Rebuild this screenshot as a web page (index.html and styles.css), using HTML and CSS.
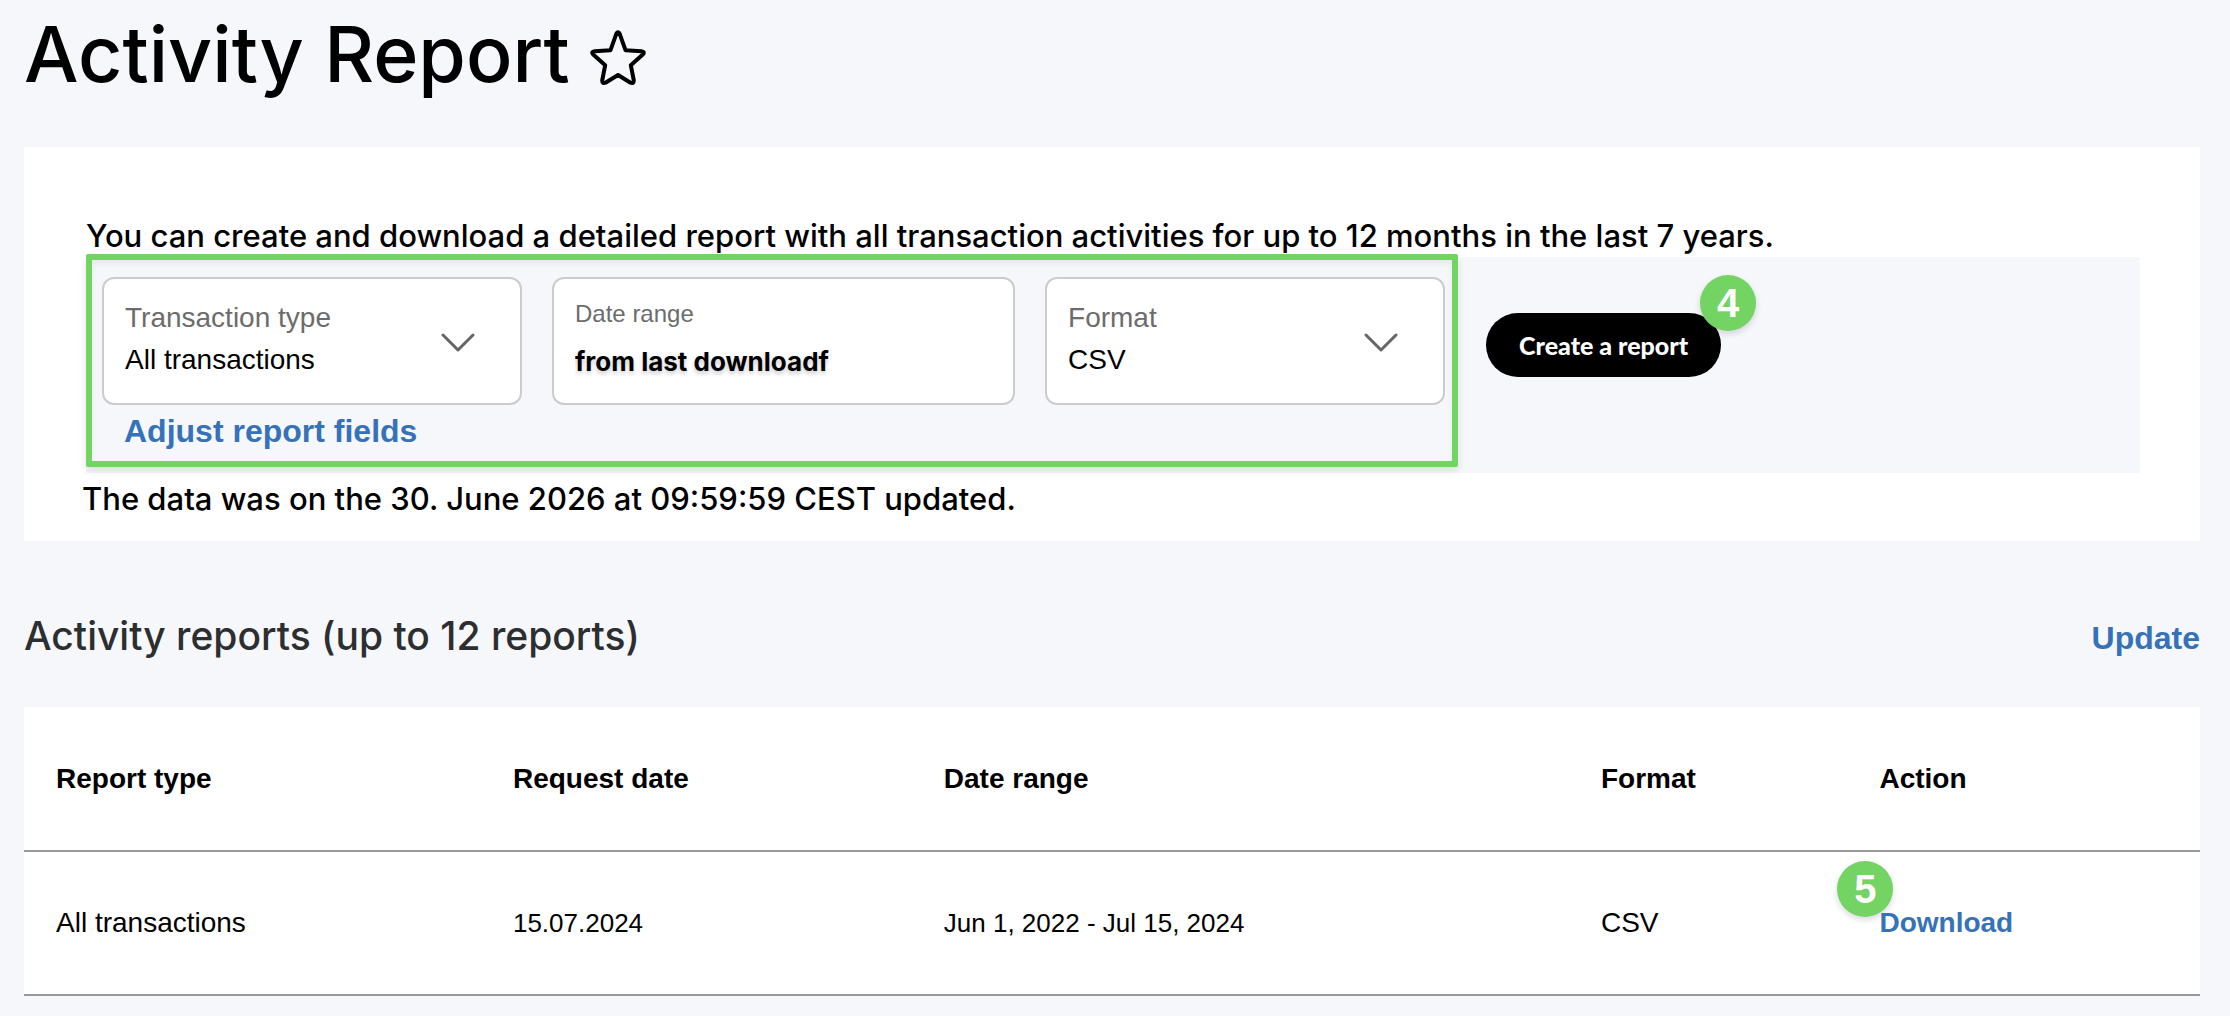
FILE: index.html
```html
<!DOCTYPE html>
<html lang="en">
<head>
    <meta charset="UTF-8">
    <meta name="viewport" content="width=device-width, initial-scale=1.0">
    <title>Activity Report</title>
    <link rel="stylesheet" href="styles.css">
</head>
<body>
    <header class="page-header">
        <h1>Activity Report</h1>
        <button type="button" class="favorite" aria-label="Add to favorites">
            <svg viewBox="0 0 56 56" width="56" height="56">
                <path d="M26.400 3.600 Q28 1 29.600 3.600 L35.500 20.200 L51.500 21.200 Q55.500 21.800 52.500 24.800 L40.800 35.200 L43.800 50.500 Q43.800 54 40.500 52.700 L28 45 L15.500 52.700 Q12.200 54 12.200 50.500 L15.200 35.200 L3.500 24.800 Q.5 21.800 4.500 21.200 L20.500 20.200 Z" />
            </svg>
        </button>
    </header>

    <section class="panel">
        <p class="intro">You can create and download a detailed report with all transaction activities for up to 12 months in the last 7 years.</p>
        <form class="report-form">
            <div class="filters">
                <div class="fields">
                    <div class="field">
                        <label for="transaction-type">Transaction type</label>
                        <select id="transaction-type" name="transactionType">
                            <option>All transactions</option>
                        </select>
                        <svg class="chevron" viewBox="0 0 34 20" width="34" height="20"><path d="M2 2 L17 17 L32 2" /></svg>
                    </div>
                    <div class="field date-field">
                        <label for="date-range">Date range</label>
                        <input type="text" id="date-range" name="dateRange" value="from last downloadf">
                    </div>
                    <div class="field">
                        <label for="format">Format</label>
                        <select id="format" name="format">
                            <option>CSV</option>
                        </select>
                        <svg class="chevron" viewBox="0 0 34 20" width="34" height="20"><path d="M2 2 L17 17 L32 2" /></svg>
                    </div>
                </div>
                <a class="adjust-link" href="#">Adjust report fields</a>
            </div>
            <div class="create">
                <button type="button" class="create-button">Create a report</button>
                <span class="step step-create">4</span>
            </div>
        </form>
        <p class="updated">The data was on the 30. June 2026 at 09:59:59 CEST updated.</p>
    </section>

    <div class="list-header">
        <h2>Activity reports (up to 12 reports)</h2>
        <a href="#">Update</a>
    </div>

    <table class="reports">
        <thead>
            <tr>
                <th class="col-type">Report type</th>
                <th class="col-request">Request date</th>
                <th class="col-range">Date range</th>
                <th class="col-format">Format</th>
                <th>Action</th>
            </tr>
        </thead>
        <tbody>
            <tr>
                <td>All transactions</td>
                <td class="date">15.07.2024</td>
                <td class="date">Jun 1, 2022 - Jul 15, 2024</td>
                <td>CSV</td>
                <td>
                    <div class="download">
                        <span class="step step-download">5</span>
                        <a href="#">Download</a>
                    </div>
                </td>
            </tr>
        </tbody>
    </table>
</body>
</html>
```

FILE: styles.css
```css
* {
    box-sizing: border-box;
}

body {
    margin: 0;
    padding: 6px 30px 20px 24px;
    background-color: #f5f7fb;
    color: #000;
    font-family: "Liberation Sans", Arial, sans-serif;
    font-size: 28px;
}

h1, h2, p {
    margin: 0;
    font-family: Inter, sans-serif;
    font-weight: 500;
}

a {
    color: #3672b9;
    font-weight: bold;
    text-decoration: none;
}

.page-header {
    display: flex;
    align-items: center;
    gap: 20px;
}

h1 {
    font-size: 77px;
    line-height: 96px;
}

.favorite {
    padding: 8px 0 0;
    border: none;
    background: none;
    cursor: pointer;
}

.favorite svg {
    display: block;
    fill: none;
    stroke: #000;
    stroke-width: 4;
    stroke-linejoin: round;
}

.panel {
    margin-top: 45px;
    padding: 67px 60px 21px 62px;
    background-color: #fff;
}

.intro,
.updated {
    font-size: 31px;
    line-height: 43px;
}

.report-form {
    display: flex;
    align-items: flex-start;
    gap: 28px;
    background-color: #f5f7fb;
}

/* green frame round the filters, slightly over the top edge of the form */
.filters {
    flex: 0 0 66.8%;
    margin: -3px 0 6px;
    padding: 17px 7px 10px 10px;
    border: 6px solid #73d363;
    border-radius: 2px;
    box-shadow: 0 4px 8px rgba(0, 0, 0, 0.1), inset 0 4px 6px rgba(0, 0, 0, 0.06);
}

.fields {
    display: grid;
    grid-template-columns: 420fr 463fr 400fr;
    gap: 30px;
}

.field {
    position: relative;
    display: flex;
    flex-direction: column;
    height: 128px;
    padding: 21px;
    border: 2px solid #ccc;
    border-radius: 12px;
    background-color: #fff;
}

.field label {
    color: #6c6c6c;
    line-height: 36px;
}

.field select,
.field input {
    width: 100%;
    height: 52px;
    padding: 0;
    border: none;
    outline: none;
    appearance: none;
    background: none;
    color: #000;
    font: inherit;
}

.date-field label {
    font-size: 24px;
    line-height: 28px;
}

.date-field input {
    margin-top: 12px;
    font-family: Inter, sans-serif;
    font-size: 26px;
    font-weight: 700;
    text-shadow: 0 3px 4px rgba(0, 0, 0, 0.2);
}

.chevron {
    position: absolute;
    top: 54px;
    right: 45px;
    fill: none;
    stroke: #666;
    stroke-width: 3;
    stroke-linecap: round;
    stroke-linejoin: round;
    pointer-events: none;
}

.adjust-link {
    display: inline-block;
    margin: 6px 0 0 22px;
    font-size: 32px;
    line-height: 40px;
}

.create {
    position: relative;
    margin-top: 56px;
}

.create-button {
    height: 64px;
    padding: 0 33px;
    border: none;
    border-radius: 32px;
    background-color: #000;
    color: #fff;
    font-family: Lato, sans-serif;
    font-size: 25px;
    font-weight: 900;
    cursor: pointer;
}

/* numbered step badges */
.step {
    position: absolute;
    width: 56px;
    height: 56px;
    border-radius: 50%;
    background-color: #73d363;
    box-shadow: 0 3px 6px rgba(0, 0, 0, 0.15);
    color: #fff;
    font-size: 40px;
    font-weight: bold;
    line-height: 56px;
    text-align: center;
}

.step-create {
    top: -38px;
    right: -35px;
}

.step-download {
    top: -46px;
    left: -42px;
}

.updated {
    margin: 4px 0 0 -4px;
}

.list-header {
    display: flex;
    align-items: center;
    justify-content: space-between;
    margin-top: 70px;
}

.list-header h2 {
    color: #2c2e2f;
    font-size: 39px;
    line-height: 50px;
}

.list-header a {
    padding-top: 4px;
    font-size: 32px;
}

.reports {
    width: 100%;
    margin-top: 46px;
    border-collapse: collapse;
    table-layout: fixed;
    background-color: #fff;
}

.reports th,
.reports td {
    height: 144px;
    padding: 0 32px;
    border-bottom: 2px solid #999;
    text-align: left;
}

.reports .date {
    font-size: 26px;
}

.col-type {
    width: 21%;
}

.col-request {
    width: 19.8%;
}

.col-range {
    width: 30.2%;
}

.col-format {
    width: 12.8%;
}

.download {
    position: relative;
}

.download a {
    position: relative;
}
```
